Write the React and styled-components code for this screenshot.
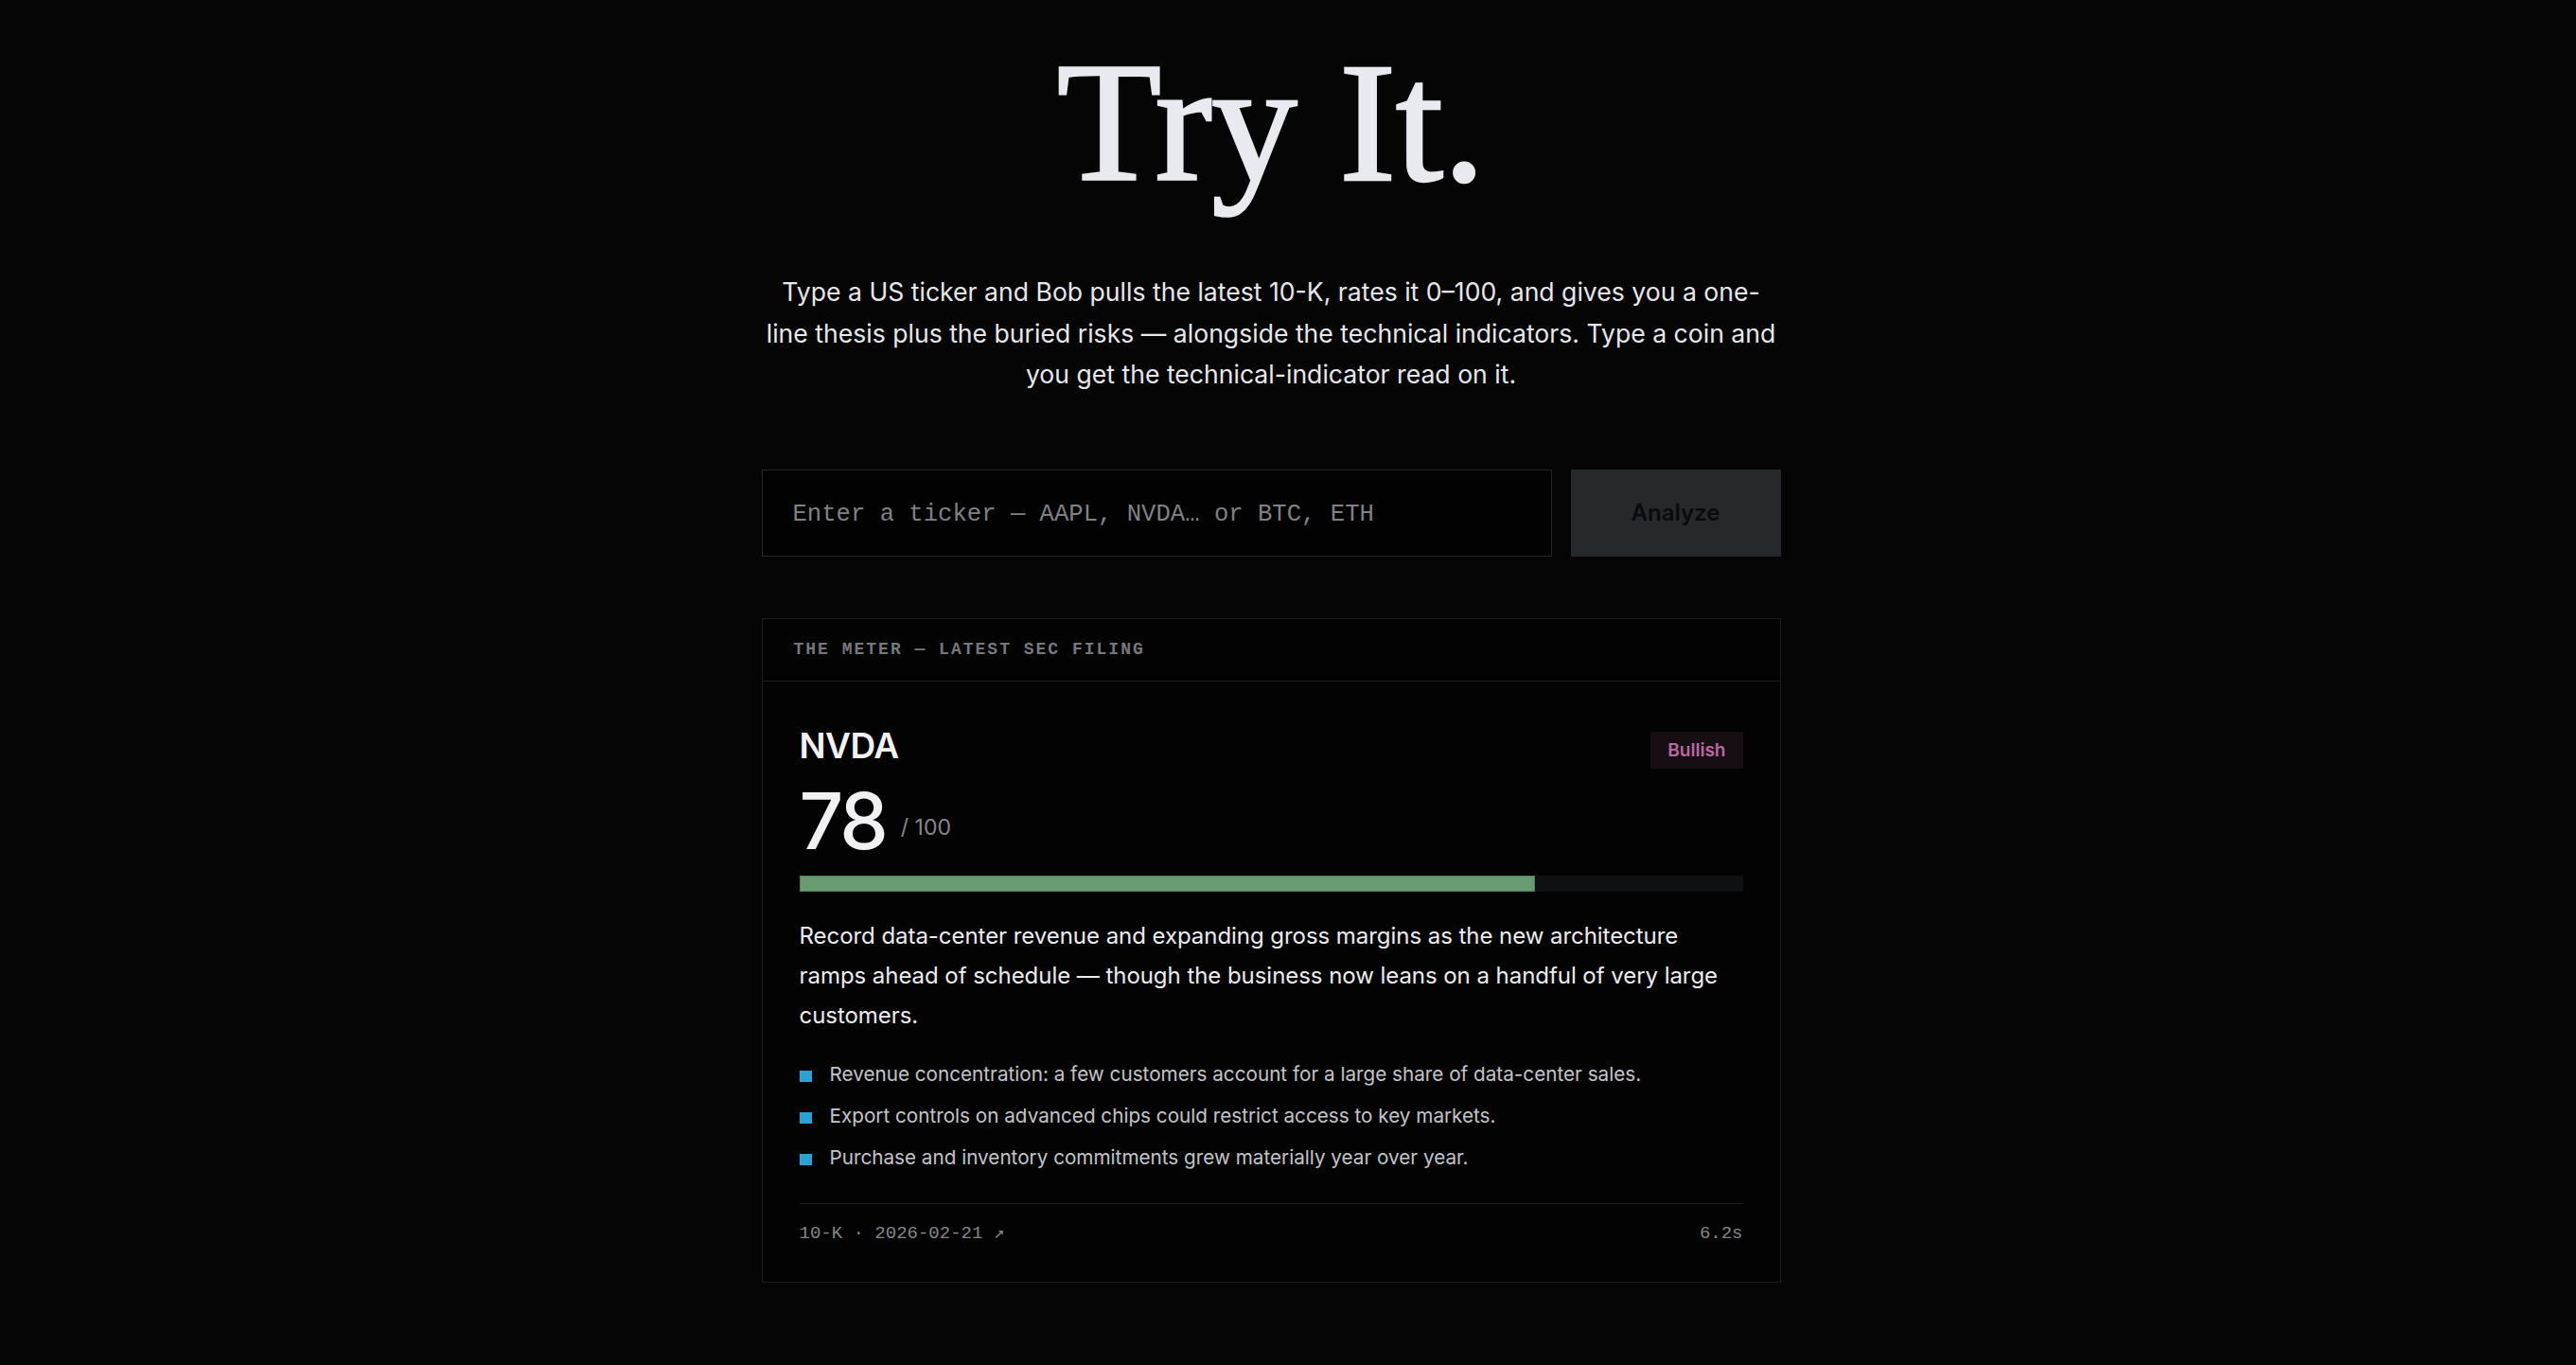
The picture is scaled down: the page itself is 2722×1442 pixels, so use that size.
import React from "react";
import styled, { createGlobalStyle } from "styled-components";

const GlobalStyle = createGlobalStyle`
  html, body {
    margin: 0;
    padding: 0;
    background: #050506;
  }
  body {
    font-family: Inter, "Noto Sans", sans-serif;
    color: #e8e9ed;
    -webkit-font-smoothing: antialiased;
  }
  * { box-sizing: border-box; }
`;

const Page = styled.main`
  min-height: 1442px;
  display: flex;
  justify-content: center;
  padding: 39px 36px 0 0;
`;

const Column = styled.section`
  width: 1077px;
  display: flex;
  flex-direction: column;
  align-items: stretch;
`;

/* Display serif: a regular cut, thickened with a stroke for heavier stems */
const Title = styled.h1`
  margin: 0;
  font-family: "Liberation Serif", "DejaVu Serif", serif;
  font-weight: 400;
  font-size: 181px;
  line-height: 1;
  letter-spacing: -0.5px;
  text-align: center;
  color: #e9eaef;
  -webkit-text-stroke: 2.5px #e9eaef;
`;

const Lead = styled.p`
  margin: 67px 0 0;
  font-size: 26.6px;
  line-height: 43.5px;
  text-align: center;
  color: #e6e7ea;
`;

const SearchRow = styled.form`
  margin-top: 78px;
  display: flex;
  gap: 20px;
  height: 92px;
`;

const TickerInput = styled.input`
  flex: 1;
  min-width: 0;
  height: 100%;
  padding: 4px 32px 0;
  background: #020203;
  border: 1px solid #262729;
  border-radius: 0;
  outline: none;
  color: #e8e9ed;
  font-family: "Liberation Mono", "DejaVu Sans Mono", monospace;
  font-size: 25.6px;

  &::placeholder {
    color: #808185;
  }
`;

const AnalyzeButton = styled.button`
  width: 222px;
  height: 100%;
  border: 0;
  border-radius: 0;
  background: #25292b;
  color: #090b0c;
  font-family: Inter, sans-serif;
  font-weight: 600;
  font-size: 24px;
  cursor: not-allowed;
`;

const Card = styled.article`
  margin-top: 65px;
  border: 1px solid #1c1d20;
  background: #030304;
`;

const CardHeader = styled.header`
  height: 66px;
  display: flex;
  align-items: center;
  padding: 0 33px;
  border-bottom: 1px solid #1c1d20;
  font-family: "Liberation Mono", "DejaVu Sans Mono", monospace;
  font-size: 18px;
  font-weight: 700;
  letter-spacing: 2px;
  text-transform: uppercase;
  color: #77787d;
`;

const CardBody = styled.div`
  padding: 46px 39px 0;
  display: flex;
  flex-direction: column;
`;

const TopRow = styled.div`
  display: flex;
  justify-content: space-between;
  align-items: flex-start;
`;

const Ticker = styled.h2`
  margin: 0;
  font-size: 37px;
  line-height: 43px;
  font-weight: 600;
  letter-spacing: -0.5px;
  color: #f1f1f3;
`;

const Badge = styled.span`
  margin-top: 7px;
  height: 39px;
  padding: 0 18px;
  display: inline-flex;
  align-items: center;
  background: ${(p) => (p.$tone === "bull" ? "#170e14" : "#0e1417")};
  color: ${(p) => (p.$tone === "bull" ? "#bb68a1" : "#67a0b9")};
  font-size: 19px;
  font-weight: 600;
`;

const ScoreRow = styled.div`
  margin-top: 15px;
  display: flex;
  align-items: flex-end;
  gap: 16px;
`;

const Score = styled.span`
  font-size: 82px;
  line-height: 1;
  font-weight: 500;
  letter-spacing: -3px;
  color: #f1f1f3;
`;

const OutOf = styled.span`
  margin-bottom: 23px;
  font-size: 23px;
  line-height: 1;
  color: #86878b;
`;

const Track = styled.div`
  margin-top: 16px;
  height: 17px;
  background: #0f1012;
`;

const Fill = styled.div`
  height: 100%;
  background: #699b72;
  border: 1px solid #4c7f55;
`;

const Thesis = styled.p`
  margin: 26px 0 0;
  font-size: 24px;
  line-height: 42px;
  letter-spacing: -0.05px;
  color: #ececef;
`;

const Risks = styled.ul`
  margin: 25px 0 0;
  padding: 0;
  list-style: none;
  display: flex;
  flex-direction: column;
  gap: 12px;
`;

const Risk = styled.li`
  display: flex;
  align-items: center;
  gap: 19px;
  font-size: 20.7px;
  line-height: 32px;
  color: #c3c4c8;

  &::before {
    content: "";
    flex: none;
    width: 13px;
    height: 12px;
    margin-top: 4px;
    background: #2ba2d5;
  }
`;

const Footer = styled.footer`
  margin-top: 32px;
  padding: 20px 0 40px;
  border-top: 1px solid #1e1f22;
  display: flex;
  justify-content: space-between;
  font-family: "Liberation Mono", "DejaVu Sans Mono", monospace;
  font-size: 19px;
  line-height: 22px;
  color: #85868a;
`;

const FilingLink = styled.a`
  color: inherit;
  text-decoration: none;
`;

const result = {
  ticker: "NVDA",
  score: 78,
  sentiment: "Bullish",
  thesis:
    "Record data-center revenue and expanding gross margins as the new architecture ramps ahead of schedule — though the business now leans on a handful of very large customers.",
  risks: [
    "Revenue concentration: a few customers account for a large share of data-center sales.",
    "Export controls on advanced chips could restrict access to key markets.",
    "Purchase and inventory commitments grew materially year over year.",
  ],
  form: "10-K",
  filed: "2026-02-21",
  elapsed: "6.2s",
};

export default function App() {
  return (
    <>
      <GlobalStyle />
      <Page>
        <Column>
          <Title>Try It.</Title>
          <Lead>
            Type a US ticker and Bob pulls the latest 10-K, rates it 0–100, and
            gives you a one-line thesis plus the buried risks — alongside the
            technical indicators. Type a coin and you get the technical-indicator
            read on it.
          </Lead>

          <SearchRow onSubmit={(e) => e.preventDefault()}>
            <TickerInput
              type="text"
              placeholder="Enter a ticker — AAPL, NVDA… or BTC, ETH"
            />
            <AnalyzeButton type="submit">Analyze</AnalyzeButton>
          </SearchRow>

          <Card>
            <CardHeader>The Meter — Latest SEC Filing</CardHeader>
            <CardBody>
              <TopRow>
                <Ticker>{result.ticker}</Ticker>
                <Badge $tone="bull">{result.sentiment}</Badge>
              </TopRow>
              <ScoreRow>
                <Score>{result.score}</Score>
                <OutOf>/ 100</OutOf>
              </ScoreRow>
              <Track>
                <Fill style={{ width: `${result.score}%` }} />
              </Track>
              <Thesis>{result.thesis}</Thesis>
              <Risks>
                {result.risks.map((r) => (
                  <Risk key={r}>{r}</Risk>
                ))}
              </Risks>
              <Footer>
                <FilingLink href="#">
                  {result.form} · {result.filed} ↗
                </FilingLink>
                <span>{result.elapsed}</span>
              </Footer>
            </CardBody>
          </Card>
        </Column>
      </Page>
    </>
  );
}
